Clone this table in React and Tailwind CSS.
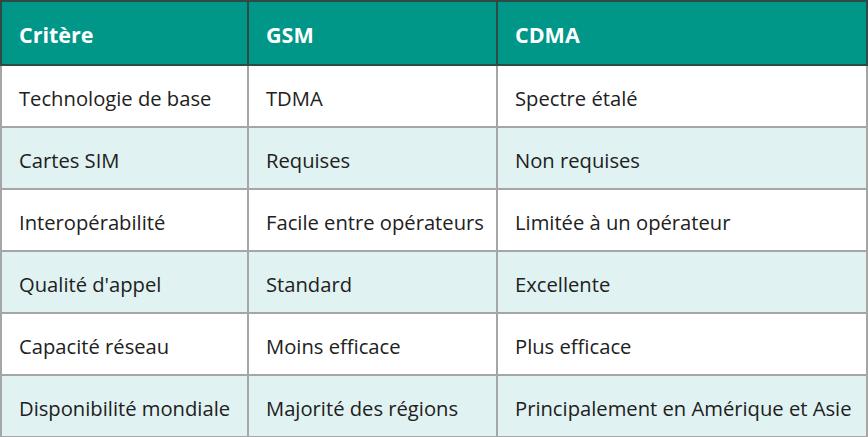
import React from 'react';

const rows = [
  ['Technologie de base', 'TDMA', 'Spectre étalé'],
  ['Cartes SIM', 'Requises', 'Non requises'],
  ['Interopérabilité', 'Facile entre opérateurs', 'Limitée à un opérateur'],
  ["Qualité d'appel", 'Standard', 'Excellente'],
  ['Capacité réseau', 'Moins efficace', 'Plus efficace'],
  ['Disponibilité mondiale', 'Majorité des régions', 'Principalement en Amérique et Asie'],
];

function App() {
  return (
    <div className="w-[868px] h-[437px] bg-white overflow-hidden" style={{ fontFamily: '"Open Sans", "Noto Sans", sans-serif' }}>
      <table className="w-[868px] table-fixed border-collapse">
        <colgroup>
          <col className="w-[247px]" />
          <col className="w-[249px]" />
          <col />
        </colgroup>
        <thead>
          <tr className="h-[64px] bg-[#009688] text-white">
            {['Critère', 'GSM', 'CDMA'].map((h) => (
              <th key={h} className="border-2 border-[#2e4a45] px-[17px] pt-[5px] text-left text-[21.5px] font-bold">
                {h}
              </th>
            ))}
          </tr>
        </thead>
        <tbody>
          {rows.map((r, i) => (
            <tr key={i} className={`h-[62px] ${i % 2 === 1 ? 'bg-[#e0f2f1]' : 'bg-white'}`}>
              {r.map((c, j) => (
                <td key={j} className="border-2 border-[#a6a6a6] px-[17px] pt-[5px] text-[20.2px] text-[#212121] whitespace-nowrap">
                  {c}
                </td>
              ))}
            </tr>
          ))}
        </tbody>
      </table>
    </div>
  );
}

export default App;
